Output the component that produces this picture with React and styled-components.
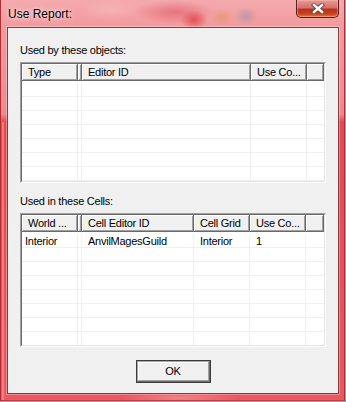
import React from 'react';
import styled, { createGlobalStyle } from 'styled-components';

const GlobalStyle = createGlobalStyle`
  html, body { margin: 0; padding: 0; background: #ffffff; }
  #root { width: 346px; height: 402px; }
`;

const Window = styled.div`
  box-sizing: border-box;
  width: 346px;
  height: 402px;
  display: flex;
  flex-direction: column;
  padding: 0 6px 7px 7px;
  border-right: 1px solid #3cc6e8;
  border-bottom: 1px solid #3cc6e8;
  background:
    linear-gradient(#b02e34, #b02e34) left top / 1px 100% no-repeat,
    linear-gradient(#b02e34, #b02e34) right top / 1px 100% no-repeat,
    linear-gradient(#c03a40, #c03a40) left bottom / 100% 1px no-repeat,
    linear-gradient(to right, transparent 0 2px, rgba(255, 160, 160, 0.55) 2px 4px, transparent 4px) left 122px / 7px 100% no-repeat,
    radial-gradient(ellipse 40px 12px at 175px 12px, rgba(214, 60, 80, 0.45), transparent),
    radial-gradient(ellipse 14px 10px at 194px 20px, rgba(220, 30, 30, 0.6), transparent),
    radial-gradient(ellipse 12px 9px at 222px 17px, rgba(214, 150, 80, 0.5), transparent),
    radial-gradient(ellipse 12px 9px at 246px 16px, rgba(130, 140, 170, 0.45), transparent),
    radial-gradient(ellipse 30px 10px at 110px 10px, rgba(250, 190, 190, 0.5), transparent),
    radial-gradient(ellipse 60px 6px at 180px 398px, rgba(250, 160, 160, 0.6), transparent),
    linear-gradient(to bottom, #f4aaad 0px, #f29a9e 27px, #f0888e 114px, #e6484f 122px, #ea5860 100%);
`;

const TitleBar = styled.div`
  height: 27px;
  flex-shrink: 0;
  display: flex;
  align-items: center;
`;

const Title = styled.span`
  padding-left: 1px;
  font-family: "Liberation Sans", Arial, sans-serif;
  font-size: 12px;
  color: #000;
  text-shadow: 0 0 6px rgba(255, 255, 255, 0.8), 0 0 3px rgba(255, 255, 255, 0.7);
`;

const CloseButton = styled.div`
  align-self: flex-start;
  margin-left: auto;
  box-sizing: border-box;
  width: 43px;
  height: 18px;
  border: 1px solid #5a1c1c;
  border-top: none;
  border-radius: 0 0 5px 5px;
  background: linear-gradient(
    to bottom,
    #e89a94 0%,
    #d6706a 45%,
    #bc3020 55%,
    #c8401e 80%,
    #e07a40 100%
  );
  box-shadow: inset 0 0 0 1px rgba(255, 200, 190, 0.4);
  display: flex;
  align-items: center;
  justify-content: center;
`;

const Client = styled.div`
  flex: 1;
  min-height: 0;
  box-sizing: border-box;
  background: #f0f0f0;
  border: 1px solid #7a4040;
  box-shadow: 0 0 0 1px rgba(255, 255, 255, 0.3);
  display: flex;
  flex-direction: column;
  padding: 16px 12px 0 12px;
  font-family: "Liberation Sans", Arial, sans-serif;
  font-size: 11px;
  letter-spacing: -0.25px;
  color: #000;
`;

const Label = styled.div`
  line-height: 13px;
  height: 13px;
  margin-bottom: 5px;
  white-space: nowrap;
`;

const ListFrame = styled.div`
  box-sizing: border-box;
  height: ${(p) => p.$h}px;
  margin-bottom: ${(p) => p.$mb || 0}px;
  flex-shrink: 0;
  border: 1px solid;
  border-color: #a0a0a0 #ffffff #ffffff #a0a0a0;
  display: flex;
`;

const ListInner = styled.div`
  flex: 1;
  min-width: 0;
  box-sizing: border-box;
  border: 1px solid;
  border-color: #696969 #e3e3e3 #e3e3e3 #696969;
  background: #ffffff;
  overflow: hidden;
  display: flex;
  flex-direction: column;
`;

const Header = styled.div`
  height: 17px;
  flex-shrink: 0;
  display: flex;
`;

const HeaderCell = styled.div`
  box-sizing: border-box;
  ${(p) => (p.$w ? `width: ${p.$w}px; flex: none;` : 'flex: 1;')}
  height: 17px;
  background: #f0f0f0;
  border-right: 1px solid #696969;
  border-bottom: 1px solid #696969;
  box-shadow: inset 1px 1px #ffffff, inset -1px -1px #a0a0a0;
  padding: 1px 0 0 ${(p) => (p.$w && p.$w > 8 ? 6 : 0)}px;
  line-height: 15px;
  white-space: nowrap;
  overflow: hidden;
`;

const Rows = styled.div`
  padding-top: 2px;
  display: flex;
  flex-direction: column;
`;

const Row = styled.div`
  box-sizing: border-box;
  height: 14px;
  flex-shrink: 0;
  display: flex;
  border-bottom: 1px solid #f0f0f0;
`;

const Cell = styled.div`
  box-sizing: border-box;
  width: ${(p) => p.$w}px;
  flex: none;
  height: 13px;
  border-right: 1px solid #f0f0f0;
  padding: 1px 0 0 ${(p) => p.$pl}px;
  line-height: 12px;
  white-space: nowrap;
  overflow: hidden;
`;

const Footer = styled.div`
  display: flex;
  justify-content: center;
  margin-top: 13px;
`;

const Button = styled.button`
  box-sizing: border-box;
  width: 75px;
  height: 23px;
  margin: 0;
  padding: 0;
  background: #f0f0f0;
  border: 1px solid #3c3c3c;
  box-shadow: inset -1px -1px #696969, inset 1px 1px #a8a8a8, inset -2px -2px #a0a0a0, inset 2px 2px #ffffff;
  font-family: "Liberation Sans", Arial, sans-serif;
  font-size: 11px;
  letter-spacing: -0.25px;
  color: #000;
  line-height: 21px;
`;

const CloseGlyph = () => (
  <svg width="14" height="11" viewBox="0 0 14 11">
    <path d="M3 2 L11 9 M11 2 L3 9" stroke="#5a4a4a" strokeWidth="4.2" strokeLinecap="square" fill="none" />
    <path d="M3 2 L11 9 M11 2 L3 9" stroke="#ffffff" strokeWidth="2.4" strokeLinecap="square" fill="none" />
  </svg>
);

const ListView = ({ columns, rows, height, mb, rowCount }) => {
  const filled = [...rows];
  while (filled.length < rowCount) filled.push(columns.map(() => ''));
  return (
    <ListFrame $h={height} $mb={mb}>
      <ListInner>
        <Header>
          {columns.map((c, i) => (
            <HeaderCell key={i} $w={c.w}>{c.label}</HeaderCell>
          ))}
          <HeaderCell />
        </Header>
        <Rows>
          {filled.map((r, ri) => (
            <Row key={ri}>
              {columns.map((c, ci) => (
                <Cell key={ci} $w={c.w} $pl={ci === 0 ? 3 : c.w > 8 ? 6 : 0}>
                  {r[ci]}
                </Cell>
              ))}
            </Row>
          ))}
        </Rows>
      </ListInner>
    </ListFrame>
  );
};

const objectColumns = [
  { label: 'Type', w: 56 },
  { label: '', w: 4 },
  { label: 'Editor ID', w: 169 },
  { label: 'Use Co...', w: 56 },
];

const cellColumns = [
  { label: 'World ...', w: 56 },
  { label: '', w: 4 },
  { label: 'Cell Editor ID', w: 112 },
  { label: 'Cell Grid', w: 56 },
  { label: 'Use Co...', w: 56 },
];

const cellRows = [['Interior', '', 'AnvilMagesGuild', 'Interior', '1']];

export default function App() {
  return (
    <>
      <GlobalStyle />
      <Window>
        <TitleBar>
          <Title>Use Report:</Title>
          <CloseButton>
            <CloseGlyph />
          </CloseButton>
        </TitleBar>
        <Client>
          <Label>Used by these objects:</Label>
          <ListView columns={objectColumns} rows={[]} height={121} mb={12} rowCount={8} />
          <Label>Used in these Cells:</Label>
          <ListView columns={cellColumns} rows={cellRows} height={134} rowCount={9} />
          <Footer>
            <Button>OK</Button>
          </Footer>
        </Client>
      </Window>
    </>
  );
}
